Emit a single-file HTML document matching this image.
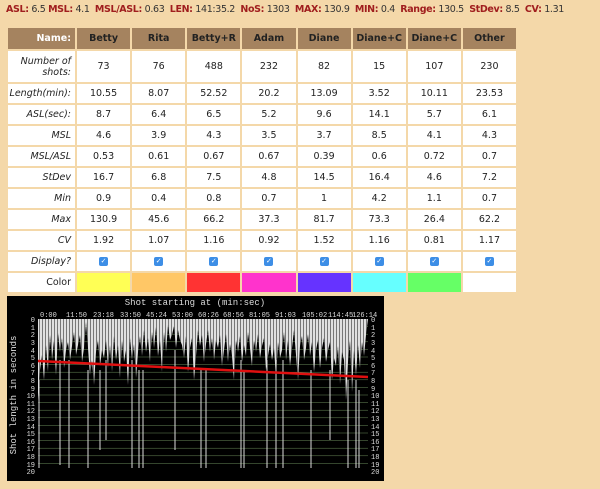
<!DOCTYPE html>
<html><head><meta charset="utf-8"><style>
body{margin:0;width:600px;height:489px;background:#f4d8a9;font-family:"DejaVu Sans","Liberation Sans",sans-serif;position:relative;overflow:hidden}
.stats{position:absolute;left:6px;top:4px;font-size:9.5px;color:#333;white-space:nowrap;letter-spacing:-0.35px}
.stats b{color:#a01e1e}
table{position:absolute;left:6px;top:26px;border-collapse:separate;border-spacing:2px;table-layout:fixed;width:512px}
td,th{font-size:9.5px;line-height:11px;text-align:center;padding:0;background:#fff;color:#222;overflow:hidden}
th{background:#a5835f;color:#222;height:21px;font-weight:bold}
th.n{color:#fff;text-align:right;padding-right:4px}
td.l{text-align:right;font-style:italic;padding-right:4px}
tr.r td{height:19px}
.cb{display:inline-block;width:9px;height:9px;background:#3d8ee6;border-radius:2px;color:#fff;font-size:7px;line-height:9px;vertical-align:middle}
</style></head><body>
<div class="stats"><b>ASL:</b> 6.5 <b>MSL:</b> 4.1 &nbsp;<b>MSL/ASL:</b> 0.63 &nbsp;<b>LEN:</b> 141:35.2 &nbsp;<b>NoS:</b> 1303 &nbsp;<b>MAX:</b> 130.9 &nbsp;<b>MIN:</b> 0.4 &nbsp;<b>Range:</b> 130.5 &nbsp;<b>StDev:</b> 8.5 &nbsp;<b>CV:</b> 1.31</div>
<table>
<colgroup><col style="width:67px"><col><col><col><col><col><col><col><col></colgroup>
<tr><th class="n">Name:</th><th>Betty</th><th>Rita</th><th>Betty+R</th><th>Adam</th><th>Diane</th><th>Diane+C</th><th>Diane+C</th><th>Other</th></tr>
<tr><td class="l" style="height:31px">Number of<br>shots:</td><td>73</td><td>76</td><td>488</td><td>232</td><td>82</td><td>15</td><td>107</td><td>230</td></tr>
<tr class="r"><td class="l">Length(min):</td><td>10.55</td><td>8.07</td><td>52.52</td><td>20.2</td><td>13.09</td><td>3.52</td><td>10.11</td><td>23.53</td></tr>
<tr class="r"><td class="l">ASL(sec):</td><td>8.7</td><td>6.4</td><td>6.5</td><td>5.2</td><td>9.6</td><td>14.1</td><td>5.7</td><td>6.1</td></tr>
<tr class="r"><td class="l">MSL</td><td>4.6</td><td>3.9</td><td>4.3</td><td>3.5</td><td>3.7</td><td>8.5</td><td>4.1</td><td>4.3</td></tr>
<tr class="r"><td class="l">MSL/ASL</td><td>0.53</td><td>0.61</td><td>0.67</td><td>0.67</td><td>0.39</td><td>0.6</td><td>0.72</td><td>0.7</td></tr>
<tr class="r"><td class="l">StDev</td><td>16.7</td><td>6.8</td><td>7.5</td><td>4.8</td><td>14.5</td><td>16.4</td><td>4.6</td><td>7.2</td></tr>
<tr class="r"><td class="l">Min</td><td>0.9</td><td>0.4</td><td>0.8</td><td>0.7</td><td>1</td><td>4.2</td><td>1.1</td><td>0.7</td></tr>
<tr class="r"><td class="l">Max</td><td>130.9</td><td>45.6</td><td>66.2</td><td>37.3</td><td>81.7</td><td>73.3</td><td>26.4</td><td>62.2</td></tr>
<tr class="r"><td class="l">CV</td><td>1.92</td><td>1.07</td><td>1.16</td><td>0.92</td><td>1.52</td><td>1.16</td><td>0.81</td><td>1.17</td></tr>
<tr class="r"><td class="l">Display?</td><td><span class="cb">✓</span></td><td><span class="cb">✓</span></td><td><span class="cb">✓</span></td><td><span class="cb">✓</span></td><td><span class="cb">✓</span></td><td><span class="cb">✓</span></td><td><span class="cb">✓</span></td><td><span class="cb">✓</span></td></tr>
<tr class="r"><td class="l" style="font-style:normal">Color</td><td style="background:#ffff55"></td><td style="background:#ffc766"></td><td style="background:#ff3333"></td><td style="background:#ff33cc"></td><td style="background:#6633ff"></td><td style="background:#66ffff"></td><td style="background:#66ff66"></td><td></td></tr>
</table>
<svg style="position:absolute;left:7px;top:296px" width="377" height="185" viewBox="7 296 377 185">
<defs><pattern id="st" width="3" height="10" patternUnits="userSpaceOnUse"><rect width="3" height="10" fill="#e0e0e0"/><rect width="1" height="10" fill="#777"/></pattern></defs>
<rect x="7" y="295" width="377" height="186" fill="#000"/>
<text x="195" y="305" fill="#ddd" font-family="Liberation Mono,monospace" font-size="9" text-anchor="middle">Shot starting at (min:sec)</text>
<g font-family="Liberation Mono,monospace" font-size="7" fill="#ddd">
<text x="40" y="317">0:00</text><text x="66" y="317">11:50</text><text x="93" y="317">23:18</text><text x="120" y="317">33:50</text><text x="146" y="317">45:24</text><text x="172" y="317">53:00</text><text x="198" y="317">60:26</text><text x="223" y="317">68:56</text><text x="249" y="317">81:05</text><text x="275" y="317">91:03</text><text x="302" y="317">105:02</text><text x="328" y="317">114:45</text><text x="352" y="317">126:14</text>
</g>
<g stroke="#6a8a5a" stroke-width="0.5">
<line x1="38" x2="368" y1="326.6" y2="326.6"/><line x1="38" x2="368" y1="334.2" y2="334.2"/><line x1="38" x2="368" y1="341.8" y2="341.8"/><line x1="38" x2="368" y1="349.4" y2="349.4"/><line x1="38" x2="368" y1="357" y2="357"/><line x1="38" x2="368" y1="364.6" y2="364.6"/><line x1="38" x2="368" y1="372.2" y2="372.2"/><line x1="38" x2="368" y1="379.8" y2="379.8"/><line x1="38" x2="368" y1="387.4" y2="387.4"/><line x1="38" x2="368" y1="395" y2="395"/><line x1="38" x2="368" y1="402.6" y2="402.6"/><line x1="38" x2="368" y1="410.2" y2="410.2"/><line x1="38" x2="368" y1="417.8" y2="417.8"/><line x1="38" x2="368" y1="425.4" y2="425.4"/><line x1="38" x2="368" y1="433" y2="433"/><line x1="38" x2="368" y1="440.6" y2="440.6"/><line x1="38" x2="368" y1="448.2" y2="448.2"/><line x1="38" x2="368" y1="455.8" y2="455.8"/><line x1="38" x2="368" y1="463.4" y2="463.4"/>
</g>
<polygon fill="url(#st)" points="38,319 38,400 40,370 42,355 44,380 46,345 48,372 50,335 52,360 54,340 56,375 58,333 60,352 62,338 64,368 66,350 68,342 70,360 72,346 74,332 76,355 78,345 80,335 82,362 84,348 86,322 88,348 90,375 92,360 94,385 96,352 98,340 100,366 102,350 104,358 106,340 108,368 110,345 112,372 114,336 116,360 118,345 120,378 122,340 124,362 126,350 128,385 130,338 132,360 134,344 136,378 138,352 140,336 142,356 144,330 146,352 148,338 150,362 152,332 154,348 156,327 158,356 160,340 162,372 164,332 166,352 168,325 170,340 172,335 174,326 176,348 178,330 180,340 182,345 184,358 186,336 188,372 190,348 192,338 194,380 196,356 198,330 200,346 202,335 204,362 206,344 208,330 210,352 212,338 214,360 216,340 218,348 220,335 222,366 224,350 226,334 228,362 230,344 232,356 234,380 236,340 238,352 240,336 242,362 244,345 246,356 248,332 250,348 252,366 254,340 256,352 258,334 260,358 262,346 264,338 266,370 268,356 270,344 272,360 274,348 276,378 278,342 280,358 282,350 284,332 286,360 288,340 290,366 292,348 294,330 296,355 298,380 300,346 302,336 304,360 306,348 308,334 310,356 312,342 314,372 316,350 318,340 320,368 322,348 324,338 326,362 328,350 330,342 332,380 334,358 336,366 338,346 340,384 342,352 344,360 346,400 348,362 350,340 352,392 354,350 356,375 358,345 360,368 362,342 364,356 366,335 368,319"/>
<g stroke="#ddd" stroke-width="1">
<line x1="39" x2="39" y1="380" y2="468"/><line x1="60" x2="60" y1="360" y2="465"/><line x1="69" x2="69" y1="360" y2="468"/><line x1="88" x2="88" y1="370" y2="468"/><line x1="100" x2="100" y1="370" y2="450"/><line x1="106" x2="106" y1="360" y2="440"/><line x1="132" x2="132" y1="360" y2="468"/><line x1="139" x2="139" y1="370" y2="468"/><line x1="143" x2="143" y1="370" y2="468"/><line x1="175" x2="175" y1="350" y2="450"/><line x1="201" x2="201" y1="370" y2="468"/><line x1="206" x2="206" y1="370" y2="468"/><line x1="241" x2="241" y1="360" y2="468"/><line x1="244" x2="244" y1="370" y2="468"/><line x1="267" x2="267" y1="360" y2="468"/><line x1="276" x2="276" y1="360" y2="468"/><line x1="283" x2="283" y1="360" y2="468"/><line x1="311" x2="311" y1="370" y2="468"/><line x1="330" x2="330" y1="370" y2="440"/><line x1="348" x2="348" y1="380" y2="468"/><line x1="356" x2="356" y1="380" y2="468"/><line x1="359" x2="359" y1="390" y2="468"/>
</g>
<line x1="38" y1="361" x2="368" y2="377" stroke="#e01010" stroke-width="2.5"/>
<g font-family="Liberation Mono,monospace" font-size="7" fill="#ddd" text-anchor="end">
<text x="35" y="322">0</text><text x="35" y="330">1</text><text x="35" y="337">2</text><text x="35" y="345">3</text><text x="35" y="353">4</text><text x="35" y="360">5</text><text x="35" y="368">6</text><text x="35" y="375">7</text><text x="35" y="383">8</text><text x="35" y="391">9</text><text x="35" y="398">10</text><text x="35" y="406">11</text><text x="35" y="413">12</text><text x="35" y="421">13</text><text x="35" y="429">14</text><text x="35" y="436">15</text><text x="35" y="444">16</text><text x="35" y="451">17</text><text x="35" y="459">18</text><text x="35" y="467">19</text><text x="35" y="474">20</text>
</g>
<g font-family="Liberation Mono,monospace" font-size="7" fill="#ddd">
<text x="371" y="322">0</text><text x="371" y="330">1</text><text x="371" y="337">2</text><text x="371" y="345">3</text><text x="371" y="353">4</text><text x="371" y="360">5</text><text x="371" y="368">6</text><text x="371" y="375">7</text><text x="371" y="383">8</text><text x="371" y="391">9</text><text x="371" y="398">10</text><text x="371" y="406">11</text><text x="371" y="413">12</text><text x="371" y="421">13</text><text x="371" y="429">14</text><text x="371" y="436">15</text><text x="371" y="444">16</text><text x="371" y="451">17</text><text x="371" y="459">18</text><text x="371" y="467">19</text><text x="371" y="474">20</text>
</g>
<text transform="translate(16,395) rotate(-90)" fill="#ddd" font-family="Liberation Mono,monospace" font-size="9" text-anchor="middle">Shot length in seconds</text>
</svg>
</body></html>
